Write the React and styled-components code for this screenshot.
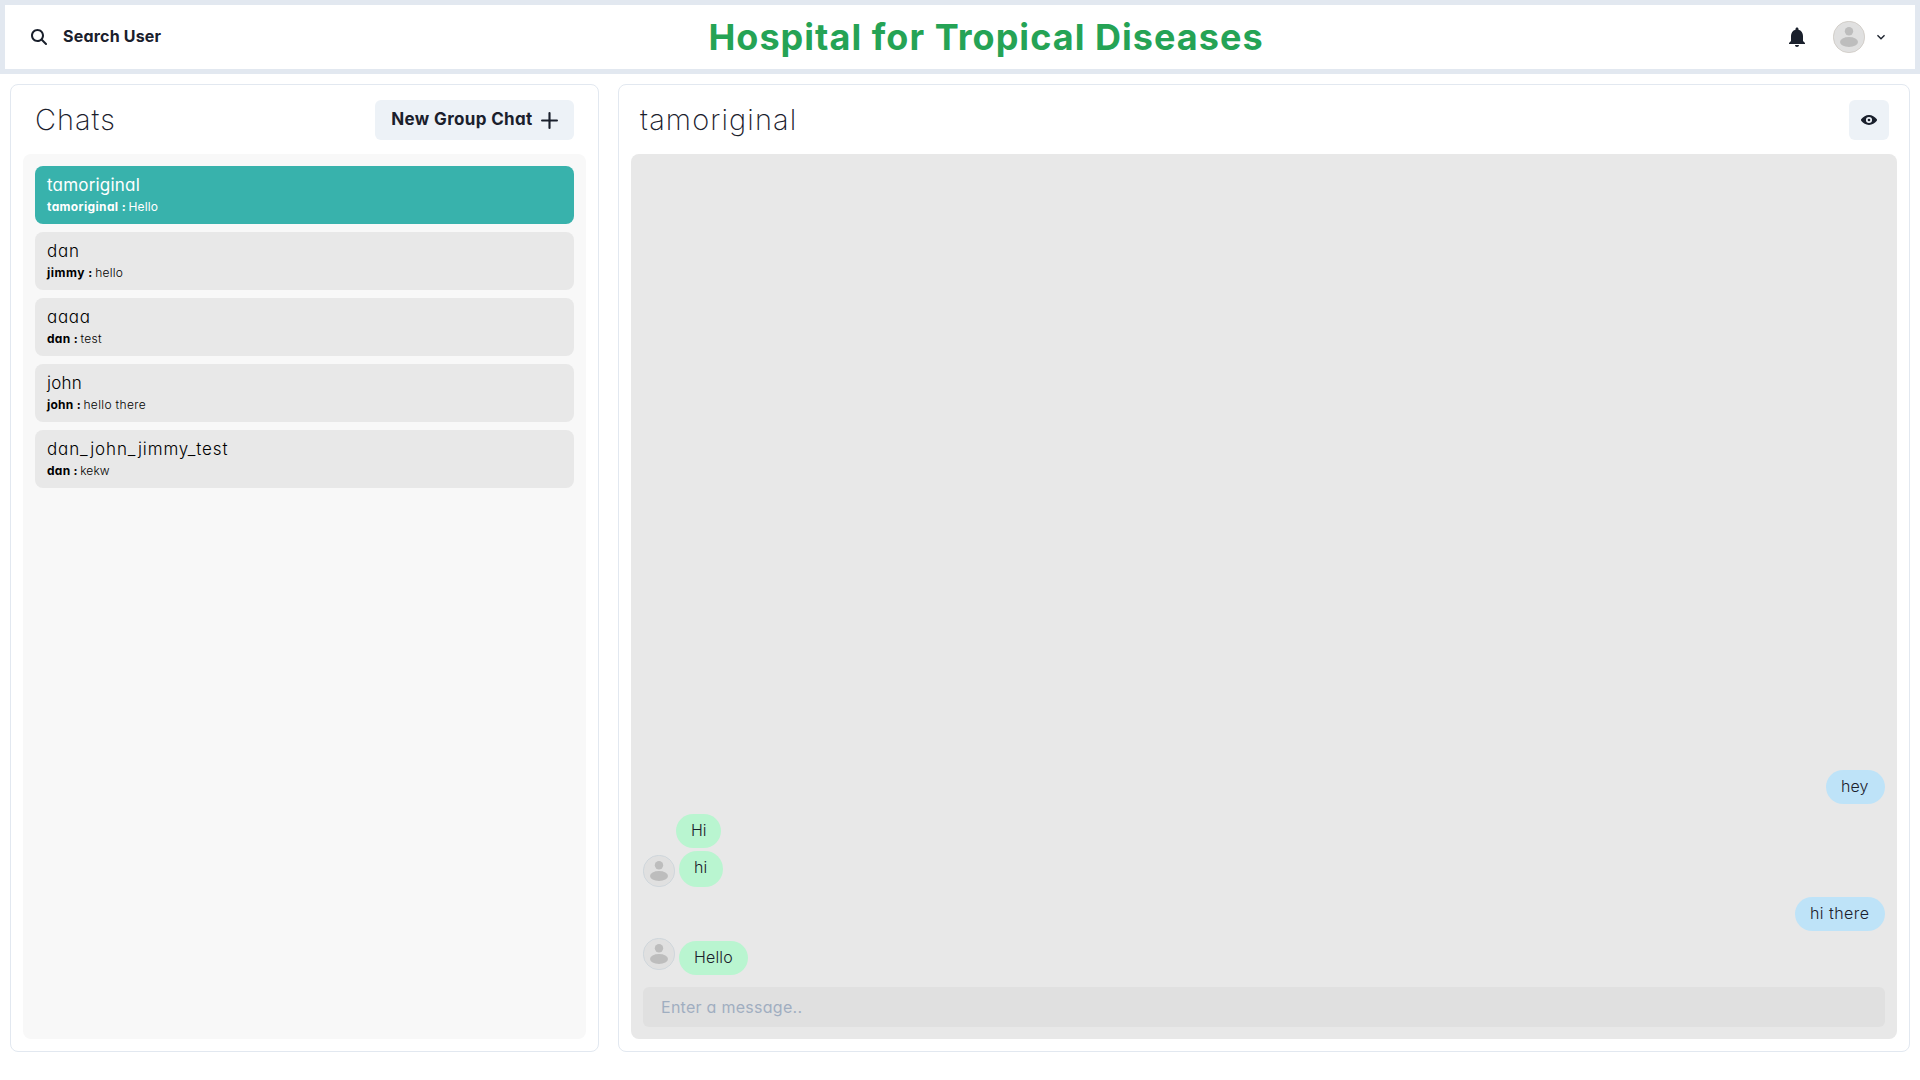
import React from "react";
import styled, { createGlobalStyle } from "styled-components";

const GlobalStyle = createGlobalStyle`
  *, *::before, *::after { box-sizing: border-box; }
  html, body { margin: 0; height: 100%; background: #fff; }
  body { font-family: Inter, "Open Sans", sans-serif; font-size: 16px; line-height: 24px; color: #1a202c; overflow: hidden; font-feature-settings: "cv11" 1; }
  button, input { font: inherit; font-feature-settings: inherit; color: inherit; border: 0; margin: 0; }
`;

const T = styled.span`
  display: block;
  white-space: pre;
  letter-spacing: ${(p) => p.$ls || 0}px;
`;

const Header = styled.header`
  display: grid;
  grid-template-columns: 1fr auto 1fr;
  align-items: center;
  height: 74px;
  padding: 5px 10px;
  border: 5px solid #e2e8f0;
`;

const SearchButton = styled.button`
  justify-self: start;
  display: flex;
  align-items: center;
  gap: 16px;
  height: 40px;
  padding: 0 16px;
  background: transparent;
  font-weight: 650;
  svg { display: block; }
  span { padding-bottom: 2px; }
`;

const Title = styled.h1`
  margin: 0 0 0 52px;
  font-size: 36px;
  line-height: 44px;
  font-weight: 700;
  font-feature-settings: normal;
  color: #25a355;
`;

const HeaderActions = styled.div`
  justify-self: end;
  display: flex;
  align-items: center;
  padding-right: 16px;
  svg { display: block; }
`;

const AvatarRing = styled.span`
  display: block;
  flex: none;
  width: 32px;
  height: 32px;
  margin: ${(p) => p.$m || 0};
  svg { display: block; }
`;

const Main = styled.main`
  display: flex;
  justify-content: space-between;
  height: 988px;
  padding: 10px;
`;

const Panel = styled.section`
  display: flex;
  flex-direction: column;
  width: ${(p) => p.$w}px;
  height: 968px;
  padding: 12px;
  border: 1px solid #e2e8f0;
  border-radius: 8px;
`;

const PanelHead = styled.div`
  display: flex;
  justify-content: space-between;
  align-items: center;
  height: 40px;
  margin: 3px 0 14px;
  padding: ${(p) => p.$pad};
`;

const PanelTitle = styled.h2`
  margin: 0;
  font-size: 29px;
  line-height: 40px;
  font-weight: 200;
  font-feature-settings: normal;
`;

const SoftButton = styled.button`
  display: flex;
  align-items: center;
  justify-content: center;
  gap: 8px;
  width: ${(p) => p.$w}px;
  height: 40px;
  padding: 0;
  border-radius: 6px;
  background: #edf2f7;
  font-size: 17px;
  font-weight: 650;
  svg { display: block; flex: none; }
  span { padding-bottom: 2px; }
`;

const ChatList = styled.div`
  display: flex;
  flex-direction: column;
  gap: 8px;
  flex: 1;
  padding: 12px;
  border-radius: 8px;
  background: #f8f8f8;
`;

const ChatCard = styled.div`
  height: 58px;
  padding: 7px 12px;
  border-radius: 8px;
  background: ${(p) => (p.$active ? "#38b2ac" : "#e8e8e8")};
  color: ${(p) => (p.$active ? "#fff" : "#000")};
`;

const ChatName = styled(T)`
  font-size: 17px;
  line-height: 24px;
  font-weight: ${(p) => (p.$active ? 400 : 350)};
`;

const Preview = styled.div`
  display: flex;
  gap: 2.5px;
  margin-top: 1px;
  font-size: 12px;
  line-height: 18px;
  font-weight: ${(p) => (p.$active ? 400 : 350)};
  b { font-weight: 700; }
`;

const Conversation = styled.div`
  display: flex;
  flex-direction: column;
  justify-content: flex-end;
  flex: 1;
  padding: 12px;
  border-radius: 8px;
  background: #e8e8e8;
`;

const MessageRow = styled.div`
  display: flex;
  align-items: flex-start;
  justify-content: ${(p) => (p.$mine ? "flex-end" : "flex-start")};
  margin-top: ${(p) => p.$mt}px;
  padding-left: ${(p) => p.$indent || 0}px;
`;

const Bubble = styled.div`
  width: ${(p) => p.$w}px;
  height: ${(p) => p.$h || 34}px;
  margin-top: ${(p) => p.$drop || 0}px;
  padding: 4px 0 5px 15px;
  border-radius: 20px;
  background: ${(p) => (p.$mine ? "#bee3f8" : "#b9f5d0")};
  font-weight: 350;
`;

const MessageInput = styled.input`
  height: 40px;
  margin-top: 12px;
  padding: 0 18px;
  border-radius: 6px;
  background: #e0e0e0;
  outline: 0;
  letter-spacing: 0.27px;
  &::placeholder { color: #a0aec0; opacity: 1; }
`;

const SearchIcon = () => (
  <svg width="16" height="16" viewBox="0 0 512 512" fill="currentColor">
    <path d="M416 208c0 45.9-14.9 88.3-40 122.7L502.6 457.4c12.5 12.5 12.5 32.8 0 45.3s-32.8 12.5-45.3 0L330.7 376c-34.4 25.2-76.8 40-122.7 40C93.1 416 0 322.9 0 208S93.1 0 208 0S416 93.1 416 208zM208 352a144 144 0 1 0 0-288 144 144 0 1 0 0 288z" />
  </svg>
);

const BellIcon = () => (
  <svg width="24" height="24" viewBox="0 0 24 24" fill="currentColor">
    <path d="M12 22c1.1 0 2-.9 2-2h-4c0 1.1.89 2 2 2zm6-6v-5c0-3.07-1.64-5.64-4.5-6.32V4c0-.83-.67-1.5-1.5-1.5s-1.5.67-1.5 1.5v.68C7.63 5.36 6 7.92 6 11v5l-2 2v1h16v-1l-2-2z" />
  </svg>
);

const ChevronIcon = () => (
  <svg width="16" height="16" viewBox="0 0 24 24" fill="currentColor">
    <path d="M16.59 8.59L12 13.17 7.41 8.59 6 10l6 6 6-6z" />
  </svg>
);

const PlusIcon = () => (
  <svg width="17" height="17" viewBox="0 0 24 24" fill="currentColor">
    <path d="M0,12a1.5,1.5,0,0,0,1.5,1.5h8.75a.25.25,0,0,1,.25.25V22.5a1.5,1.5,0,0,0,3,0V13.75a.25.25,0,0,1,.25-.25H22.5a1.5,1.5,0,0,0,0-3H13.75a.25.25,0,0,1-.25-.25V1.5a1.5,1.5,0,0,0-3,0v8.75a.25.25,0,0,1-.25.25H1.5A1.5,1.5,0,0,0,0,12Z" />
  </svg>
);

const EyeIcon = () => (
  <svg width="16" height="16" viewBox="0 0 24 24" fill="currentColor">
    <path d="M23.432,10.524C20.787,7.614,16.4,4.538,12,4.6,7.6,4.537,3.213,7.615,.568,10.524a2.211,2.211,0,0,0,0,2.948C3.182,16.351,7.507,19.4,11.839,19.4h.308c4.347,0,8.671-3.049,11.288-5.929A2.21,2.21,0,0,0,23.432,10.524ZM7.4,12A4.6,4.6,0,1,1,12,16.6,4.6,4.6,0,0,1,7.4,12Z" />
    <circle cx="12" cy="12" r="2" />
  </svg>
);

const Avatar = ({ margin, ring = "#c3cfd6" }) => (
  <AvatarRing $m={margin}>
    <svg width="32" height="32" viewBox="0 0 32 32">
      <circle cx="16" cy="16" r="15.7" fill="#e0e0e0" stroke={ring} strokeWidth="0.6" />
      <circle cx="16" cy="10.2" r="4.2" fill="#bdbdbd" />
      <ellipse cx="16" cy="21" rx="9" ry="5" fill="#bdbdbd" />
    </svg>
  </AvatarRing>
);

const chats = [
  { name: "tamoriginal", nls: 0.2, sender: "tamoriginal :", sls: 0.36, text: "Hello", tls: 0.1, active: true },
  { name: "dan", nls: 0.75, sender: "jimmy :", sls: 0.5, text: "hello", tls: 0.2 },
  { name: "aaaa", nls: 0.7, sender: "dan :", sls: 0.3, text: "test", tls: 0.3 },
  { name: "john", nls: 0.25, sender: "john :", sls: 0.25, text: "hello there", tls: 0.35 },
  { name: "dan_john_jimmy_test", nls: 0.88, sender: "dan :", sls: 0.25, text: "kekw", tls: 0.1 },
];

const messages = [
  { text: "hey", mine: true, w: 59, mt: 0 },
  { text: "Hi", w: 45, mt: 10, indent: 33 },
  { text: "hi", w: 44, h: 36, mt: 3, avatar: "4px 4px 0 0" },
  { text: "hi there", mine: true, w: 90, mt: 10, ls: 0.45 },
  { text: "Hello", w: 69, mt: 7, drop: 3, avatar: "0 4px 0 0", ls: 0.15 },
];

export default function App() {
  return (
    <>
      <GlobalStyle />
      <Header>
        <SearchButton>
          <SearchIcon />
          <T $ls={0.2}>Search User</T>
        </SearchButton>
        <Title><T $ls={1.03}>Hospital for Tropical Diseases</T></Title>
        <HeaderActions>
          <BellIcon />
          <Avatar margin="0 8px 0 24px" ring="#c4bdb6" />
          <ChevronIcon />
        </HeaderActions>
      </Header>
      <Main>
        <Panel $w={589}>
          <PanelHead $pad="0 12px">
            <PanelTitle><T $ls={1}>Chats</T></PanelTitle>
            <SoftButton $w={199}>
              <T $ls={0.35}>New Group Chat</T>
              <PlusIcon />
            </SoftButton>
          </PanelHead>
          <ChatList>
            {chats.map((c) => (
              <ChatCard key={c.name} $active={c.active}>
                <ChatName $ls={c.nls} $active={c.active}>{c.name}</ChatName>
                <Preview $active={c.active}>
                  <T as="b" $ls={c.sls}>{c.sender}</T>
                  <T $ls={c.tls}>{c.text}</T>
                </Preview>
              </ChatCard>
            ))}
          </ChatList>
        </Panel>
        <Panel $w={1292}>
          <PanelHead $pad="0 8px 0 9px">
            <PanelTitle><T $ls={1.1}>tamoriginal</T></PanelTitle>
            <SoftButton $w={40} aria-label="View profile">
              <EyeIcon />
            </SoftButton>
          </PanelHead>
          <Conversation>
            {messages.map((m, i) => (
              <MessageRow key={i} $mine={m.mine} $mt={m.mt} $indent={m.indent}>
                {m.avatar && <Avatar margin={m.avatar} />}
                <Bubble $mine={m.mine} $w={m.w} $h={m.h} $drop={m.drop}>
                  <T $ls={m.ls}>{m.text}</T>
                </Bubble>
              </MessageRow>
            ))}
            <MessageInput placeholder="Enter a message.." />
          </Conversation>
        </Panel>
      </Main>
    </>
  );
}
